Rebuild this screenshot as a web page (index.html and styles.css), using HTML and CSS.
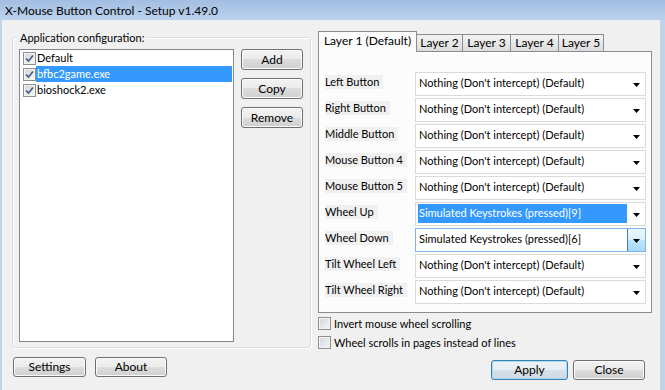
FILE: index.html
```html
<!DOCTYPE html>
<html>
<head>
	<meta charset="utf-8">
	<title>X-Mouse Button Control - Setup v1.49.0</title>
	<link rel="stylesheet" href="styles.css">
</head>
<body>
<div class="window">
	<div class="titlebar">X-Mouse Button Control - Setup v1.49.0</div>
	<div class="client">
		<div class="main">
			<div class="group">
				<span class="group-title">Application configuration:</span>
				<div class="group-body">
					<ul class="applist">
						<li class="app"><span class="check"><svg viewBox="0 0 11 11"><path d="M2 5.5 4.5 8 9 2.5"/></svg></span><span class="app-name">Default</span></li>
						<li class="app selected"><span class="check"><svg viewBox="0 0 11 11"><path d="M2 5.5 4.5 8 9 2.5"/></svg></span><span class="app-name">bfbc2game.exe</span></li>
						<li class="app"><span class="check"><svg viewBox="0 0 11 11"><path d="M2 5.5 4.5 8 9 2.5"/></svg></span><span class="app-name">bioshock2.exe</span></li>
					</ul>
					<div class="app-buttons">
						<button class="btn">Add</button>
						<button class="btn">Copy</button>
						<button class="btn">Remove</button>
					</div>
				</div>
			</div>

			<div class="layers">
				<ul class="tabs">
					<li class="tab active t1">Layer 1 (Default)</li>
					<li class="tab t2">Layer 2</li>
					<li class="tab t3">Layer 3</li>
					<li class="tab t4">Layer 4</li>
					<li class="tab t5">Layer 5</li>
				</ul>
				<div class="panel">
					<div class="row"><span class="label">Left Button</span><div class="combo"><span class="value">Nothing (Don't intercept) (Default)</span><span class="drop"><svg viewBox="0 0 7 4"><polygon points="0,0 7,0 3.5,4"/></svg></span></div></div>
					<div class="row"><span class="label">Right Button</span><div class="combo"><span class="value">Nothing (Don't intercept) (Default)</span><span class="drop"><svg viewBox="0 0 7 4"><polygon points="0,0 7,0 3.5,4"/></svg></span></div></div>
					<div class="row"><span class="label">Middle Button</span><div class="combo"><span class="value">Nothing (Don't intercept) (Default)</span><span class="drop"><svg viewBox="0 0 7 4"><polygon points="0,0 7,0 3.5,4"/></svg></span></div></div>
					<div class="row"><span class="label">Mouse Button 4</span><div class="combo"><span class="value">Nothing (Don't intercept) (Default)</span><span class="drop"><svg viewBox="0 0 7 4"><polygon points="0,0 7,0 3.5,4"/></svg></span></div></div>
					<div class="row"><span class="label">Mouse Button 5</span><div class="combo"><span class="value">Nothing (Don't intercept) (Default)</span><span class="drop"><svg viewBox="0 0 7 4"><polygon points="0,0 7,0 3.5,4"/></svg></span></div></div>
					<div class="row"><span class="label">Wheel Up</span><div class="combo selected"><span class="value">Simulated Keystrokes (pressed)[9]</span><span class="drop"><svg viewBox="0 0 7 4"><polygon points="0,0 7,0 3.5,4"/></svg></span></div></div>
					<div class="row"><span class="label">Wheel Down</span><div class="combo hot"><span class="value">Simulated Keystrokes (pressed)[6]</span><span class="drop"><svg viewBox="0 0 7 4"><polygon points="0,0 7,0 3.5,4"/></svg></span></div></div>
					<div class="row"><span class="label">Tilt Wheel Left</span><div class="combo"><span class="value">Nothing (Don't intercept) (Default)</span><span class="drop"><svg viewBox="0 0 7 4"><polygon points="0,0 7,0 3.5,4"/></svg></span></div></div>
					<div class="row"><span class="label">Tilt Wheel Right</span><div class="combo"><span class="value">Nothing (Don't intercept) (Default)</span><span class="drop"><svg viewBox="0 0 7 4"><polygon points="0,0 7,0 3.5,4"/></svg></span></div></div>
				</div>
				<label class="option"><span class="check"></span>Invert mouse wheel scrolling</label>
				<label class="option"><span class="check"></span>Wheel scrolls in pages instead of lines</label>
			</div>
		</div>

		<div class="footer">
			<button class="btn settings">Settings</button>
			<button class="btn about">About</button>
			<span class="spacer"></span>
			<button class="btn default apply">Apply</button>
			<button class="btn close">Close</button>
		</div>
	</div>
</div>
</body>
</html>
```

FILE: styles.css
```css
*{margin: 0;padding: 0;box-sizing: border-box;}
ul{list-style: none;}
body{
	width: 665px;
	height: 390px;
	overflow: hidden;
	background: #bfd4ec;
	font-family: Lato, "Noto Sans", sans-serif;
	font-size: 11px;
	color: #000;
}
.window{height: 390px; display: flex; flex-direction: column;}
.titlebar{
	height: 20px;
	flex: none;
	padding: 2px 0 0 5px;
	font-size: 12px;
	line-height: 18px;
	background: linear-gradient(#a2bee2, #bcd2ec);
}
.client{flex: 1; margin: 0 5px 0 2px; background: #f0f0f0; display: flex; flex-direction: column;}
.main{height: 330px; flex: none; display: flex; align-items: flex-start;}

/* application group box */
.group{
	margin: 17px 0 0 10px;
	width: 299px;
	height: 311px;
	border: 1px solid #d5dfe5;
	border-radius: 3px;
	box-shadow: inset 1px 1px #fff, 1px 1px #fff;
}
.group-title{display: block; width: fit-content; margin: -8px 0 0 5px; padding: 0 2px; line-height: 15px; background: #f0f0f0;}
.group-body{display: flex; gap: 7px; padding: 4px 0 0 6px;}
.applist{width: 215px; height: 293px; border: 1px solid #828790; background: #fff;}
.app{display: flex; align-items: center; height: 16px; padding-left: 3px;}
.app-name{flex: 1; height: 16px; line-height: 15px; padding-left: 1px; margin-right: 1px;}
.app.selected .app-name{background: #3399ff; color: #fff;}
.app-buttons{display: flex; flex-direction: column; gap: 8px; width: 62px;}

/* check boxes */
.check{
	flex: none;
	width: 13px;
	height: 13px;
	border: 1px solid #8e8f8f;
	background: linear-gradient(135deg, #d2d5da, #f6f6f6);
	box-shadow: inset 0 0 0 1px #f4f4f4;
	display: flex;
	align-items: center;
	justify-content: center;
}
.check svg{width: 11px; height: 11px; fill: none; stroke: #4a5d80; stroke-width: 1.7;}

/* push buttons */
.btn{
	height: 21px;
	border: 1px solid #707070;
	border-radius: 3px;
	background: linear-gradient(#f2f2f2 0, #ebebeb 50%, #dddddd 50%, #cfcfcf 100%);
	box-shadow: inset 0 0 0 1px #fbfbfb;
	font: inherit;
	font-size: 12px;
	color: #000;
	text-align: center;
	line-height: 19px;
}
.btn.default{
	border-color: #3c7fb1;
	box-shadow: inset 0 0 0 1px #a4dcf9;
	background: linear-gradient(#eef3f7 0, #e6edf3 50%, #d8e1e9 50%, #cdd8e2 100%);
}

/* layer tabs */
.layers{margin: 11px 0 0 7px; width: 334px;}
.tabs{display: flex; align-items: flex-end; height: 20px;}
.tab{
	height: 17px;
	margin-left: -1px;
	border: 1px solid #898c95;
	border-bottom: none;
	background: linear-gradient(#f3f3f3, #e8e8e8 50%, #dcdcdc);
	text-align: center;
	line-height: 16px;
	font-size: 12px;
}
.tab.active{height: 21px; margin: 0 0 -1px 0; background: #fcfcfc; position: relative; z-index: 1; line-height: 18px;}
.t1{width: 99px;}
.t2{width: 47px;}
.t3{width: 49px;}
.t4{width: 49px;}
.t5{width: 46px;}
.panel{
	height: 262px;
	border: 1px solid #898c95;
	background: #fcfcfc;
	padding: 20px 5px 0 6px;
	display: flex;
	flex-direction: column;
	gap: 2px;
}
.row{display: flex; align-items: center; height: 24px;}
.label{background: #f0f0f0; padding-right: 4px; line-height: 14px; margin-bottom: 4px;}
.combo{
	margin-left: auto;
	width: 231px;
	height: 24px;
	border: 1px solid #dadada;
	background: #fff;
	display: flex;
	align-items: center;
	padding-left: 2px;
}
.value{flex: 1; line-height: 18px; padding: 0 0 1px 1px; margin-bottom: 2px;}
.combo.selected .value{background: #3399ff; color: #fff;}
.drop{width: 18px; height: 22px; display: flex; align-items: center; justify-content: center; padding-top: 2px;}
.drop svg{width: 7px; height: 4px; fill: #000;}
.combo.hot{border-color: #7eb4ea;}
.combo.hot .drop{
	border-left: 1px solid #3c7fb1;
	background: linear-gradient(#eaf6fd 0, #d9f0fc 50%, #bee6fd 50%, #a7d9f5 100%);
}

/* options under the tabs */
.option{display: flex; align-items: center; gap: 3px; height: 19px;}
.option:first-of-type{margin-top: 1px;}

/* bottom buttons */
.footer{display: flex; align-items: flex-start; padding: 7px 15px 0 11px;}
.footer .btn{height: 20px; line-height: 18px;}
.settings{width: 73px;}
.about{width: 72px; margin-left: 9px;}
.spacer{flex: 1;}
.apply{width: 77px; margin-top: 3px;}
.close{width: 72px; margin: 3px 0 0 5px;}
```
